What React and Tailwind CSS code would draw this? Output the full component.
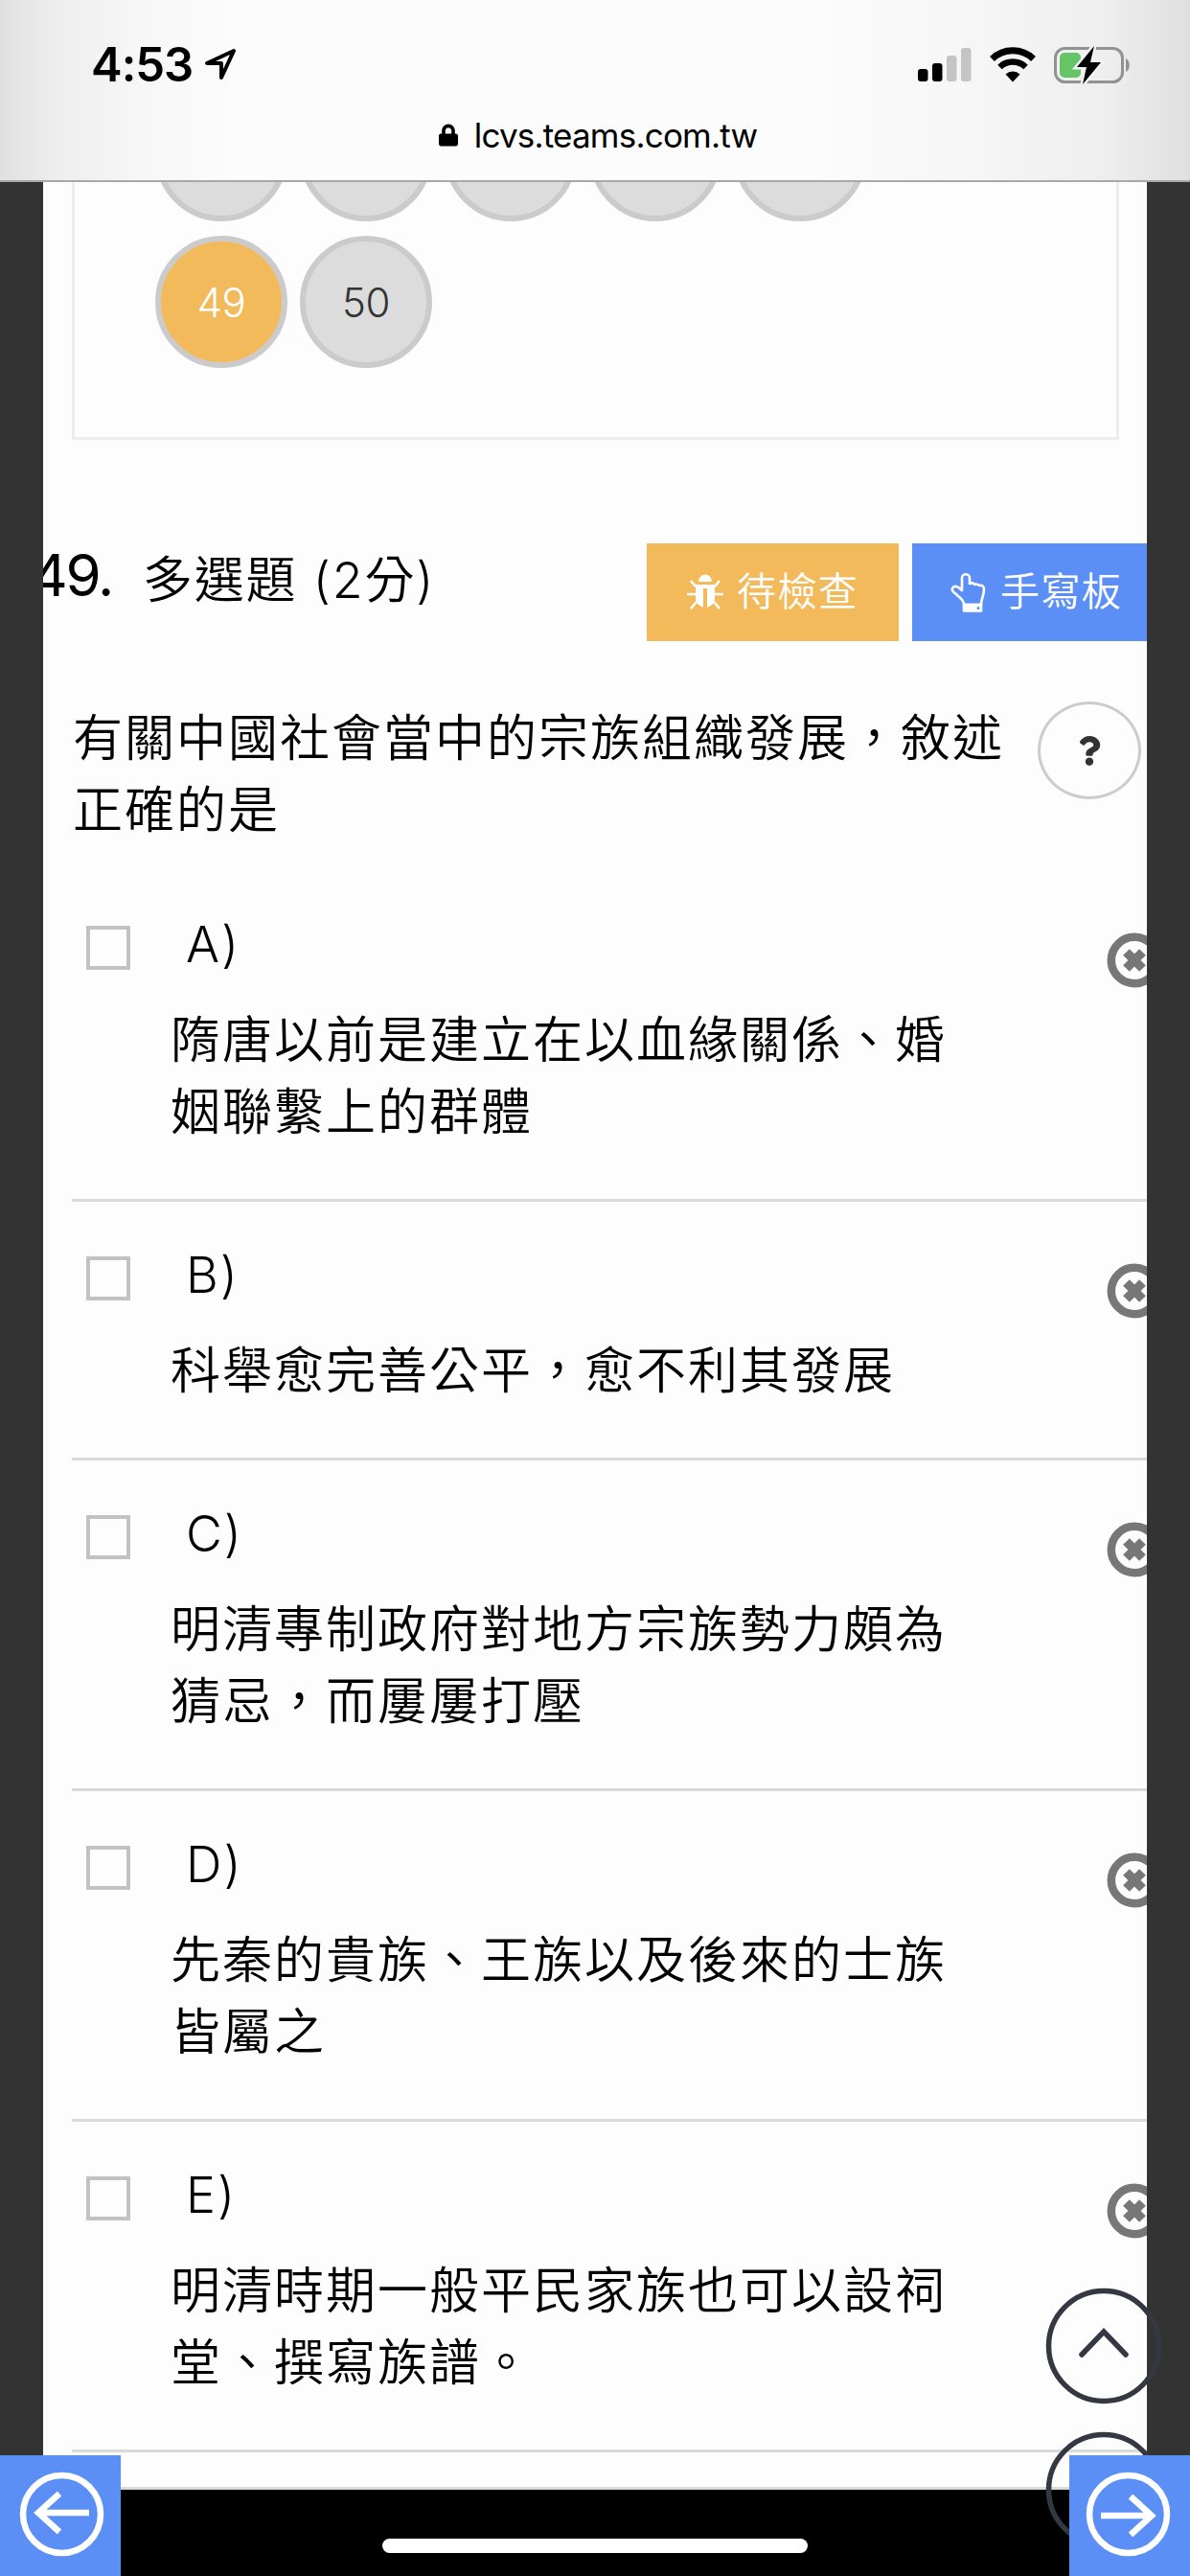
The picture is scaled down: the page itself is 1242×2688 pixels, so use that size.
import React from "react";
import { FaLock, FaQuestion } from "react-icons/fa";

const options = [
  { key: "A", lines: ["隋唐以前是建立在以血緣關係、婚", "姻聯繫上的群體"] },
  { key: "B", lines: ["科舉愈完善公平，愈不利其發展"] },
  { key: "C", lines: ["明清專制政府對地方宗族勢力頗為", "猜忌，而屢屢打壓"] },
  { key: "D", lines: ["先秦的貴族、王族以及後來的士族", "皆屬之"] },
  { key: "E", lines: ["明清時期一般平民家族也可以設祠", "堂、撰寫族譜。"] },
];

const BugIcon = () => (
  <svg width="38" height="38" viewBox="0 0 38 38" fill="none" stroke="#fff" strokeWidth="2.6" className="shrink-0">
    <path d="M12 8a7 7.500 0 0 1 14 0z" fill="#fff" stroke="none" />
    <path d="M9 11h20v14c0 5-4 9-8 9.500V15h-4v19.500C13 34 9 30 9 25z" fill="#fff" stroke="none" />
    <path d="M9 13 4 7M29 13l5-6M9 21H0M29 21h9M10 29l-6 7M28 29l6 7" />
  </svg>
);

const HandIcon = () => (
  <svg width="38" height="44" viewBox="0 0 38 44" fill="none" stroke="#fff" strokeWidth="2.600" strokeLinejoin="round" className="shrink-0">
    <path d="M14 35c0-6-5-7-8-11-3-2-5-4-4-6 2-4 6-2 10 2V7c0-5 8-5 8 0v6c2-1 4-1 5 1 2-1 4 0 5 1 3-1 5 1 5 4 0 7-3 9-3 16z" />
    <path d="M14 35h18v6.500H14z" fill="#fff" />
    <circle cx="29" cy="38.500" r="1.500" fill="#5b8ff5" stroke="none" />
  </svg>
);

const RemoveIcon = () => (
  <svg width="58" height="58" viewBox="0 0 58 58" className="shrink-0">
    <circle cx="29" cy="29" r="24.200" fill="none" stroke="#777" strokeWidth="8.500" />
    <path d="M20.500 20.500l17 17M37.500 20.500l-17 17" stroke="#777" strokeWidth="9.500" />
  </svg>
);

const StatusBar = () => (
  <header className="h-[190px] shrink-0 border-b-2 border-[#a8a8a8] bg-[linear-gradient(90deg,#e0e0e0_0%,#eeeeee_5%,#f7f7f7_12%,#fcfcfc_20%,#fcfcfc_68%,#f6f6f6_82%,#eeeeee_93%,#dfdfdf_100%)] font-[Inter,sans-serif] text-black">
    <div className="flex h-[106px] items-start justify-between pl-[95px] pr-[62px] pt-[39px]">
      <div className="flex items-start">
        <span className="text-[49px] font-semibold leading-[58px] tracking-[-1px]">4:53</span>
        <svg width="34" height="35" viewBox="0 0 34 35" className="ml-3 mt-[11px]" fill="none" stroke="#000" strokeWidth="4" strokeLinejoin="round">
          <path d="M31 3 3 16h15v15z" />
        </svg>
      </div>
      <div className="flex items-start pt-[9px]">
        <svg width="56" height="38" viewBox="0 0 56 38">
          <rect x="0" y="24" width="10.500" height="13" rx="3" />
          <rect x="15" y="18" width="10.500" height="19" rx="3" />
          <rect x="30" y="10" width="10.500" height="27" rx="3" fill="#c4c4c4" />
          <rect x="45" y="2" width="10.500" height="35" rx="3" fill="#c4c4c4" />
        </svg>
        <svg width="48" height="38" viewBox="0 0 48 38" className="ml-[19px]" fill="none" stroke="#000">
          <path d="M2.500 13.500a31 31 0 0 1 43 0" strokeWidth="7" />
          <path d="M10.500 22a19.500 19.500 0 0 1 27 0" strokeWidth="6.500" />
          <path d="M24 37.500l-7.500-8a11 11 0 0 1 15 0z" fill="#000" stroke="none" />
        </svg>
        <svg width="80" height="42" viewBox="0 0 80 42" className="ml-[19px] -mt-px">
          <rect x="1.500" y="3.500" width="70" height="35" rx="10" fill="none" stroke="#929292" strokeWidth="3" />
          <path d="M75 14c5 2 5 12 0 14z" fill="#929292" />
          <rect x="6" y="8" width="22" height="26" rx="5" fill="#65c466" />
          <path d="M42 1 24 23h10l-4 18 19-23H38z" stroke="#f2f2f2" strokeWidth="5" />
          <path d="M42 1 24 23h10l-4 18 19-23H38z" />
        </svg>
      </div>
    </div>
    <div className="flex h-[70px] items-center justify-center pl-[6px]">
      <FaLock className="mr-[17px] h-[28px] w-[20px]" />
      <span className="text-[35px] leading-[40px] tracking-[-0.8px]">lcvs.teams.com.tw</span>
    </div>
  </header>
);

const QuestionMap = () => (
  <section className="ml-[30px] h-[269px] w-[1093px] shrink-0 overflow-hidden border-x-[3px] border-b-[3px] border-[#ededed]">
    <div className="-mt-[97px] ml-[84px] grid w-[742px] grid-cols-5 gap-x-[13px] gap-y-[15px] text-[42px] font-light tracking-[-0.5px]">
      {[44, 45, 46, 47, 48, 49, 50].map((n) => (
        <div
          key={n}
          className={`flex h-[138px] w-[138px] items-center justify-center rounded-full border-[6px] border-[#cbcbcb] ${
            n === 49 ? "bg-[#f3ba5c] text-white" : "bg-[#dcdcdc] text-[#333]"
          }`}
        >
          {n < 49 ? "" : n}
        </div>
      ))}
    </div>
  </section>
);

const Option = ({ label, lines }) => (
  <li className="flex items-start border-b-[3px] border-[#dadada] pb-[53px] pt-[57px]">
    <span className="ml-[15px] h-[46px] w-[46px] shrink-0 border-4 border-[#c2c2c2]" />
    <div className="ml-[42px] w-[930px] shrink-0">
      <p className="-mt-[6px] ml-[16px] h-[88px] font-light leading-[52px]">{label})</p>
      {lines.map((line) => (
        <p key={line} className="h-[75px] whitespace-nowrap leading-[75px]">{line}</p>
      ))}
    </div>
    <div className="ml-[47px] mt-[7px] w-[42px] shrink-0 overflow-hidden">
      <RemoveIcon />
    </div>
  </li>
);

const NavButton = ({ right }) => (
  <button className={`absolute bottom-0 h-[126px] w-[126px] bg-[#5b8ff5] ${right ? "right-0" : "left-0"}`}>
    <svg width="126" height="126" viewBox="0 0 126 126" fill="none" stroke="#fff" strokeWidth="6.500">
      {right ? (
        <>
          <circle cx="61.500" cy="61.500" r="40.500" />
          <path d="M33 63h54M64 43l22 20-22 20" />
        </>
      ) : (
        <>
          <circle cx="64.500" cy="61.500" r="40.500" />
          <path d="M93 60H39M62 40 40 60l22 20" />
        </>
      )}
    </svg>
  </button>
);

const App = () => (
  <div className="relative flex h-[2688px] w-[1242px] flex-col overflow-hidden bg-black font-[Inter,'Noto_Sans_CJK_TC',sans-serif] text-black">
    <StatusBar />
    <main className="flex h-[2405px] shrink-0 flex-col overflow-hidden border-x-[45px] border-[#333] bg-[#fdfdfd]">
      <QuestionMap />

      <div className="mt-[108px] flex h-[102px] shrink-0 items-start">
        <span className="-ml-[13px] mt-[-5px] w-[117px] shrink-0 whitespace-nowrap text-[60px] leading-[76px] tracking-[-2.200px]">49.</span>
        <h1 className="mt-px w-[526px] shrink-0 whitespace-nowrap text-[52px] font-[350] leading-[76px] tracking-[1.800px]">多選題 (2分)</h1>
        <button className="flex h-[102px] w-[263px] shrink-0 items-center bg-[#f3ba5c] pl-[42px] text-[41px] font-[350] tracking-[1.400px] text-white">
          <BugIcon />
          <span className="ml-[14px]">待檢查</span>
        </button>
        <button className="ml-[14px] flex h-[102px] w-[263px] shrink-0 items-center bg-[#5b8ff5] pl-[40px] text-[41px] font-[350] tracking-[1.400px] text-white">
          <HandIcon />
          <span className="ml-[14px]">手寫板</span>
        </button>
      </div>

      <div className="mt-[63px] flex h-[177px] shrink-0 items-start pl-[31px] text-[52px] font-[350] tracking-[2px]">
        <div className="mt-px w-[1007px] whitespace-nowrap leading-[75px]">
          <p>有關中國社會當中的宗族組織發展，敘述</p>
          <p>正確的是</p>
        </div>
        <span className="flex h-[102px] w-[108px] items-center justify-center rounded-[50%] border-[3px] border-[#ccc] text-[#333]">
          <FaQuestion className="h-[31px] w-[24px]" />
        </span>
      </div>

      <ul className="ml-[30px] shrink-0 text-[52px] font-[350] tracking-[2px]">
        {options.map((o) => (
          <Option key={o.key} label={o.key} lines={o.lines} />
        ))}
      </ul>
    </main>
    <div className="flex h-[93px] shrink-0 justify-center border-t-[3px] border-[#dadada] pt-[51px]">
      <div className="h-[15px] w-[444px] rounded-full bg-white" />
    </div>

    {/* floating scroll buttons */}
    <svg width="124" height="280" viewBox="0 0 124 280" className="absolute right-[28px] top-[2386px]" fill="none" stroke="#333842" strokeWidth="5.500">
      <circle cx="62" cy="62" r="57.500" />
      <path d="M39 71 62 47l23 24" strokeLinecap="round" />
      <circle cx="62" cy="212" r="57.500" />
    </svg>
    <NavButton />
    <NavButton right />
  </div>
);

export default App;
